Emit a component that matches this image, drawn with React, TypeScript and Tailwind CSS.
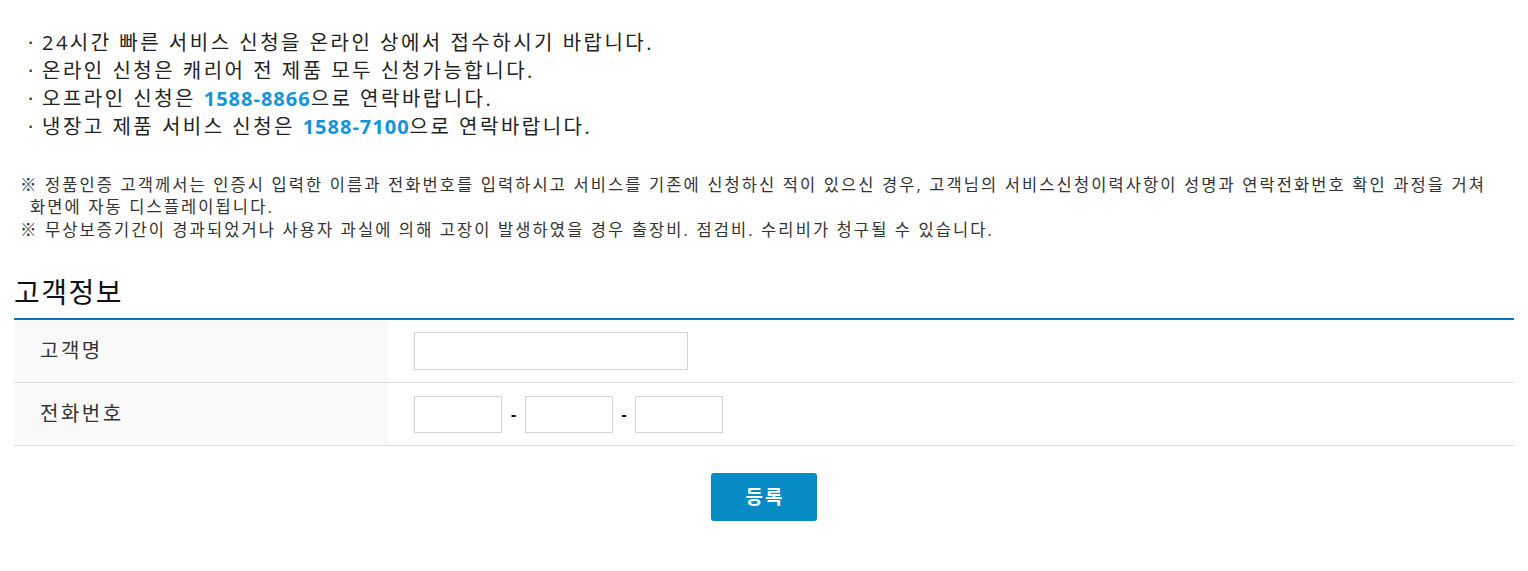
import React from "react";

const font = { fontFamily: "'Open Sans', 'Noto Sans CJK KR', sans-serif" };

export default function App() {
  return (
    <div className="w-[1528px] bg-white px-[14px] text-[#222]" style={font}>
      <ul className="pt-[29px] pl-[14px] text-[20px] leading-[28px] tracking-[2.5px]">
        <li className="flex">
          <span className="w-[14px] shrink-0 tracking-normal">·</span>
          <span>24시간 빠른 서비스 신청을 온라인 상에서 접수하시기 바랍니다.</span>
        </li>
        <li className="flex">
          <span className="w-[14px] shrink-0 tracking-normal">·</span>
          <span>온라인 신청은 캐리어 전 제품 모두 신청가능합니다.</span>
        </li>
        <li className="flex">
          <span className="w-[14px] shrink-0 tracking-normal">·</span>
          <span>
            오프라인 신청은 <b className="font-bold tracking-[1px] text-[#1095dd]">1588-8866</b>으로 연락바랍니다.
          </span>
        </li>
        <li className="flex">
          <span className="w-[14px] shrink-0 tracking-normal">·</span>
          <span>
            냉장고 제품 서비스 신청은 <b className="font-bold tracking-[1px] text-[#1095dd]">1588-7100</b>으로 연락바랍니다.
          </span>
        </li>
      </ul>

      <div className="mt-[33px] pl-[6px] text-[16.5px] leading-[22px] text-[#333] tracking-[2.1px]">
        <p className="pl-[10px] -indent-[10px] whitespace-nowrap">
          ※ 정품인증 고객께서는 인증시 입력한 이름과 전화번호를 입력하시고 서비스를 기존에 신청하신 적이 있으신 경우, 고객님의 서비스신청이력사항이 성명과 연락전화번호 확인 과정을 거쳐
          <br />
          화면에 자동 디스플레이됩니다.
        </p>
        <p className="mt-[1px] whitespace-nowrap">
          ※ 무상보증기간이 경과되었거나 사용자 과실에 의해 고장이 발생하였을 경우 출장비. 점검비. 수리비가 청구될 수 있습니다.
        </p>
      </div>

      <h2 className="mt-[33px] text-[28px] leading-[36px] tracking-[1.5px] text-[#111]">고객정보</h2>

      <div className="mt-[8px] border-t-2 border-[#0a74b8]">
        <div className="flex h-[63px] border-b border-[#dddddd]">
          <div className="flex w-[374px] items-center bg-[#f9f9f9] pl-[26px] text-[20px] tracking-[2.5px] text-[#333]">
            고객명
          </div>
          <div className="flex items-center pl-[26px]">
            <input className="h-[38px] w-[274px] border border-[#d4d4d4] bg-white outline-none" />
          </div>
        </div>
        <div className="flex h-[63px] border-b border-[#dddddd]">
          <div className="flex w-[374px] items-center bg-[#f9f9f9] pl-[26px] text-[20px] tracking-[2.5px] text-[#333]">
            전화번호
          </div>
          <div className="flex items-center pl-[26px]">
            <input className="h-[37px] w-[88px] border border-[#d4d4d4] bg-white outline-none" />
            <span className="w-[23px] text-center text-[16px] font-bold text-[#111]">-</span>
            <input className="h-[37px] w-[88px] border border-[#d4d4d4] bg-white outline-none" />
            <span className="w-[22px] text-center text-[16px] font-bold text-[#111]">-</span>
            <input className="h-[37px] w-[88px] border border-[#d4d4d4] bg-white outline-none" />
          </div>
        </div>
      </div>

      <div className="flex justify-center pt-[27px] pb-[50px]">
        <button className="h-[48px] w-[106px] rounded-[3px] bg-[#078bc5] pl-[2px] text-[19px] font-bold tracking-[2px] text-white">
          등록
        </button>
      </div>
    </div>
  );
}
